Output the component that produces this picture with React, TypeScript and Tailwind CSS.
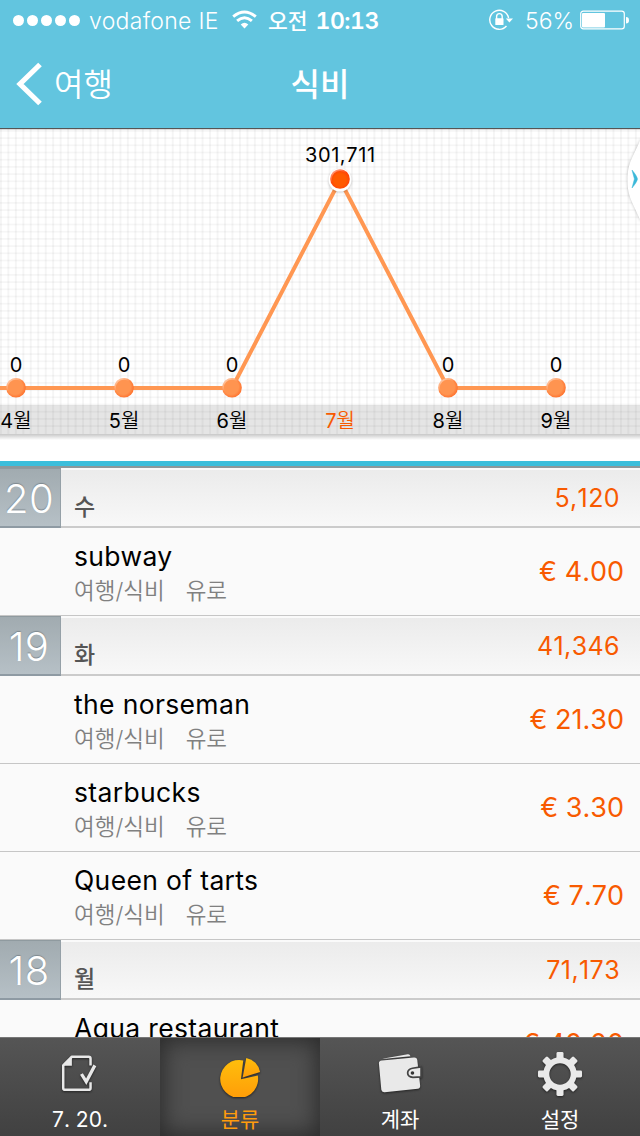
import React from "react";

const FONT = "font-['Inter','Noto_Sans_CJK_KR',sans-serif]";

const points = [
  { x: 16, y: 387, label: "4월", value: "0" },
  { x: 124, y: 387, label: "5월", value: "0" },
  { x: 232, y: 387, label: "6월", value: "0" },
  { x: 340, y: 179, label: "7월", value: "301,711", active: true },
  { x: 448, y: 387, label: "8월", value: "0" },
  { x: 556, y: 387, label: "9월", value: "0" },
];

const range = (n: number) => Array.from({ length: n }, (_, i) => i);

function StatusBar() {
  return (
    <div className="flex h-10 items-center pl-[13px] pr-[11px] text-white">
      <div className="flex w-[68px] gap-[3px]">
        {range(5).map((i) => (
          <span key={i} className="size-[11px] rounded-full bg-white" />
        ))}
      </div>
      <span className="ml-[8px] mt-[2px] w-[131px] whitespace-nowrap text-[23px] font-[350] leading-[40px] tracking-[0.3px]">vodafone IE</span>
      <svg className="ml-[12px] -mt-px" width="25" height="20" viewBox="0 0 25 20" fill="none" stroke="#fff" strokeWidth="2.9">
        <path d="M1.2 6.7Q12.5-2.7 23.8 6.7" />
        <path d="M5.1 10.9Q12.5 4.5 19.9 10.9" />
        <path d="M8.7 14.4Q12.5 11.2 16.3 14.4L12.5 18.5Z" fill="#fff" stroke="none" />
      </svg>
      <span className="ml-[11px] mt-[2px] flex w-[112px] whitespace-nowrap leading-[40px]">
        <span className="text-[21.5px] font-medium">오전</span>
        <span className="ml-[8px] text-[23px] font-semibold tabular-nums tracking-[-0.5px]">10:13</span>
      </span>
      <svg className="ml-auto" width="24" height="22" viewBox="0 0 24 22" fill="none" stroke="#fff" strokeWidth="1.4">
        <path d="M19.6 9A9.5 9.5 0 1 0 17.5 17" />
        <path d="M16.8 9.5h7.2l-3.6 4z" fill="#fff" stroke="none" />
        <rect x="6.3" y="9.3" width="8.2" height="6.7" rx=".6" fill="#fff" stroke="none" />
        <path d="M7.6 10V7.4a2.8 2.8 0 0 1 5.6 0V10" />
      </svg>
      <span className="ml-[12px] mt-[2px] w-[50px] whitespace-nowrap text-[23px] font-light leading-[40px]">56%</span>
      <svg className="ml-[5px]" width="49" height="20" viewBox="0 0 49 20">
        <rect x=".7" y="1.2" width="43.6" height="17.6" rx="2.6" fill="none" stroke="#fff" strokeWidth="1.2" />
        <rect x="2" y="3" width="23" height="14.5" rx="1" fill="#fff" />
        <path d="M46 7q3 0 3 3.2T46 13.5z" fill="#fff" />
      </svg>
    </div>
  );
}

function NavBar() {
  return (
    <div className="grid h-[88px] grid-cols-3 items-center text-white">
      <div className="flex items-center pl-[16px]">
        <svg className="-mt-px" width="28" height="44" viewBox="0 0 28 44" fill="none" stroke="#fff" strokeWidth="5.2">
          <path d="M24 2.5 4 22 24 41.5" />
        </svg>
        <span className="ml-[10px] mt-px text-[32px] font-[350] leading-[48px]">여행</span>
      </div>
      <span className="mt-px text-center text-[32px] font-medium leading-[48px]">식비</span>
    </div>
  );
}

function Chart() {
  return (
    <svg className="block shrink-0 [font-kerning:none]" width="640" height="333" viewBox="0 128 640 333">
      <defs>
        <radialGradient id="dot" cx=".45" cy=".45" r=".55">
          <stop offset=".7" stopColor="#ff9450" />
          <stop offset="1" stopColor="#ff7430" />
        </radialGradient>
        <radialGradient id="dotActive" cx=".5" cy=".55" r=".55">
          <stop offset=".55" stopColor="#ff5a00" />
          <stop offset="1" stopColor="#ff3c0a" />
        </radialGradient>
        <linearGradient id="gloss" x1="0" y1="0" x2=".7" y2="1">
          <stop offset="0" stopColor="#fff" stopOpacity=".6" />
          <stop offset=".5" stopColor="#fff" stopOpacity="0" />
        </linearGradient>
        <linearGradient id="drop" x1="0" y1="0" x2="0" y2="1">
          <stop offset="0" stopColor="#000" stopOpacity=".22" />
          <stop offset="1" stopColor="#000" stopOpacity="0" />
        </linearGradient>
        <filter id="soft" x="-30%" y="-30%" width="160%" height="160%">
          <feGaussianBlur stdDeviation="1.6" />
        </filter>
      </defs>
      <rect y="128" width="640" height="333" fill="#fff" />
      {range(86).map((i) => (
        <rect key={i} x={-0.1 + i * 7.47} y="129" width="2" height="305" fill="#000" opacity=".038" />
      ))}
      {range(42).map((i) => (
        <rect key={i} x="0" y={130 + i * 7.2} width="640" height="1.8" fill="#000" opacity=".036" />
      ))}
      <rect y="405" width="640" height="29" fill="#000" opacity=".1" />
      <rect y="434" width="640" height="6" fill="url(#drop)" />
      <rect y="128" width="640" height="1.2" fill="#555" />
      <path d="M-5 388H232L340 180 448 388H556" fill="none" stroke="#ff9752" strokeWidth="4" />
      {points.map((p) => (
        <g key={p.x}>
          {p.active && <circle cx={p.x} cy={p.y + 2} r="11" fill="#000" opacity=".3" filter="url(#soft)" />}
          {p.active && <circle cx={p.x} cy={p.y + 1} r="11.5" fill="#fff" />}
          <circle cx={p.x} cy={p.active ? p.y : p.y + 0.8} r="9.8" fill={p.active ? "url(#dotActive)" : "url(#dot)"} />
          <circle cx={p.x} cy={p.active ? p.y : p.y + 0.8} r="9" fill="none" stroke="url(#gloss)" strokeWidth="1.8" />
          <text className="tracking-[0.6px]" x={p.x + 0.3} y={p.active ? 161.5 : 371.5} textAnchor="middle" fontSize="20" fill="#000">{p.value}</text>
          <text x={p.x} y="427.5" textAnchor="middle" fontSize="20" fill={p.active ? "#f85a00" : "#000"}>
            {p.label[0]}
            <tspan className="font-[350]">{p.label[1]}</tspan>
          </text>
        </g>
      ))}
      <path d="M641 138C633 158 627.500 162 627.500 180S633 202 641 222Z" fill="#000" opacity=".25" filter="url(#soft)" />
      <path d="M641 138C633 158 627.500 162 627.500 180S633 202 641 222Z" fill="#fff" />
      <path d="M632 170q5 6 5.500 9q-.5 3-5.500 9l2.400-9z" fill="#3bb8d8" stroke="#3bb8d8" strokeWidth=".5" />
    </svg>
  );
}

function DayHeader({ day, weekday, total }: { day: string; weekday: string; total: string }) {
  return (
    <div className="flex h-[60px] shrink-0 border-b-2 border-[#cbcbcb] bg-linear-to-b from-[#ebebeb] to-[#f8f8f8] shadow-[inset_0_2px_0_#fafafa]">
      <div className="-mb-0.5 h-[60px] w-[61px] border-b-2 border-r border-t border-b-[#8e9aa3] border-r-[#95a0a7] border-t-[#8f9a9f] bg-linear-to-b from-[#a1abb0] to-[#b6c0c6] text-center text-[40px] font-[350] leading-[59px] text-white [text-shadow:0_-1px_1px_#7f898f]">
        <span className="-ml-[10px] -mr-2 tracking-[0.3px] [font-kerning:none]">{day}</span>
      </div>
      <span className="ml-[13px] mt-[22px] text-[23px] font-medium leading-[34px] text-[#555]">{weekday}</span>
      <span className="ml-auto mr-[20px] text-[25px] leading-[61px] tracking-[0.4px] text-[#f85a00] [font-kerning:none]">{total}</span>
    </div>
  );
}

function Entry({ name, amount }: { name: string; amount: string }) {
  return (
    <div className="flex h-[88px] shrink-0 items-center justify-between border-b border-[#c6c6c6] bg-[#fafafa] pl-[74px] pr-[16px] pt-[5px]">
      <div className="flex flex-col">
        <span className="-mt-px mb-px text-[26.500px] leading-[34px] tracking-[0.35px] text-black">{name}</span>
        <span className="whitespace-pre text-[22.5px] font-[350] leading-[34px] text-[#808080]">여행/식비<span className="ml-[21px]">유로</span></span>
      </div>
      <span className="-mt-[5px] text-[27px] leading-[40px] text-[#f85a00] [font-kerning:none]">{amount}</span>
    </div>
  );
}

function NoteIcon() {
  return (
    <svg width="44" height="48" viewBox="0 0 44 48" fill="none" stroke="#e8e8e8" strokeWidth="2.6" strokeLinejoin="round" className="drop-shadow-[0_1px_1px_#222]">
      <path d="M33 15V8q0-2-2-2H13.500L4.500 15V38.500q0 2 2 2H31q2 0 2-2v-6" />
      <path d="M13.500 6v9.500H5z" fill="#e8e8e8" stroke="none" />
      <path d="M23.500 24 28.500 32 37.500 15" strokeWidth="3.400" strokeLinejoin="miter" />
    </svg>
  );
}

function PieIcon() {
  return (
    <svg width="44" height="48" viewBox="0 0 44 48" className="drop-shadow-[0_1px_1px_#222]">
      <defs>
        <linearGradient id="pie" x1="0" y1="0" x2="0" y2="1">
          <stop offset="0" stopColor="#ffbe0c" />
          <stop offset="1" stopColor="#ff9d08" />
        </linearGradient>
      </defs>
      <path d="M25.400 9.800A19.800 19.800 0 1 0 40.600 25.500L23 29.500Z" fill="url(#pie)" />
      <path d="M28.500 7.200A18 18 0 0 1 43 22L24.800 27.600Z" fill="url(#pie)" />
    </svg>
  );
}

function WalletIcon() {
  return (
    <svg width="48" height="48" viewBox="0 0 48 48" className="drop-shadow-[0_1px_1px_#222]">
      <g fill="#e9e9e9">
        <path d="M5.500 8 32 3.500q2-.5 3 2L8 8.100z" />
        <path d="M5 10 38.500 6.700q3-.3 3.500 2.500L45 36q.3 3-2.500 3.500L8 43q-3 .3-3.500-2.500L2 13q-.2-2.600 3-3Z" />
      </g>
      <path d="M46 16.500 37 18q-5 1-5 5t5.500 4.500L46 27z" fill="#e9e9e9" stroke="#444" strokeWidth="1.800" />
      <circle cx="37" cy="23" r="1.900" fill="#333" />
    </svg>
  );
}

function GearIcon() {
  return (
    <svg width="48" height="48" viewBox="0 0 48 48" className="drop-shadow-[0_1px_1px_#222]">
      <g fill="#e9e9e9">
        {range(8).map((i) => (
          <rect key={i} x="20.300" y="1" width="7.400" height="10" rx="1.500" transform={`rotate(${i * 45} 24 24)`} />
        ))}
      </g>
      <circle cx="24" cy="24" r="14.300" fill="none" stroke="#e9e9e9" strokeWidth="6.200" />
    </svg>
  );
}

function Tab({ label, active, children }: { label: string; active?: boolean; children: React.ReactNode }) {
  return (
    <div
      className={
        active
          ? "flex flex-1 flex-col items-center bg-[#505050] pt-[13px] text-[#ff9c0c] shadow-[inset_0_0_22px_3px_#2b2b2b]"
          : "flex flex-1 flex-col items-center pt-[13px] text-white"
      }
    >
      {children}
      <span className="mt-[7px] whitespace-nowrap text-[21px] leading-[32px] [font-kerning:none]">{label}</span>
    </div>
  );
}

export default function App() {
  return (
    <div className={`flex h-[1136px] w-[640px] flex-col overflow-hidden bg-[#fafafa] ${FONT}`}>
      <header className="h-[128px] shrink-0 bg-[#62c5df]">
        <StatusBar />
        <NavBar />
      </header>
      <Chart />
      <div className="h-[7px] shrink-0 border-t-[5px] border-[#3bbedb] bg-[#8d989b]" />
      <main className="flex min-h-0 flex-1 flex-col overflow-hidden">
        <DayHeader day="20" weekday="수" total="5,120" />
        <Entry name="subway" amount="€ 4.00" />
        <DayHeader day="19" weekday="화" total="41,346" />
        <Entry name="the norseman" amount="€ 21.30" />
        <Entry name="starbucks" amount="€ 3.30" />
        <Entry name="Queen of tarts" amount="€ 7.70" />
        <DayHeader day="18" weekday="월" total="71,173" />
        <Entry name="Aqua restaurant" amount="€ 40.00" />
      </main>
      <nav className="flex h-[99px] shrink-0 border-t border-[#777] bg-linear-to-b from-[#555] to-[#414141]">
        <Tab label="7. 20."><NoteIcon /></Tab>
        <Tab label="분류" active><PieIcon /></Tab>
        <Tab label="계좌"><WalletIcon /></Tab>
        <Tab label="설정"><GearIcon /></Tab>
      </nav>
    </div>
  );
}
